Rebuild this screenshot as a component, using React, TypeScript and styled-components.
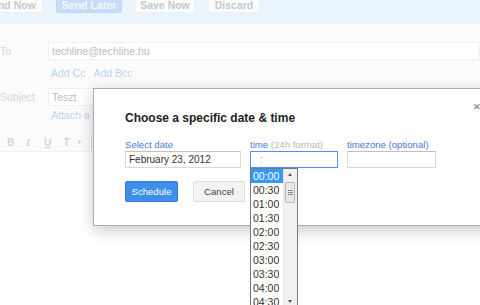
import React from "react";
import styled, { createGlobalStyle } from "styled-components";

const GlobalStyle = createGlobalStyle`
  html, body {
    margin: 0;
    padding: 0;
    background: #fff;
  }
  body {
    font-family: "Liberation Sans", Arial, sans-serif;
    width: 480px;
    height: 305px;
    overflow: hidden;
  }
`;

const Page = styled.div`
  position: relative;
  width: 480px;
  height: 305px;
  overflow: hidden;
  background: #fff;
`;

const TopBar = styled.div`
  height: 24px;
  background: #eaf4fc;
  display: flex;
  align-items: flex-start;
  gap: 13px;
  margin-left: -22px;
`;

const BarButton = styled.div<{ $primary?: boolean; $width: number }>`
  width: ${(p) => p.$width}px;
  height: 22px;
  margin-top: -9px;
  border-radius: 2px;
  box-sizing: border-box;
  background: ${(p) => (p.$primary ? "#c6dcf8" : "#fbfcfd")};
  border: 1px solid ${(p) => (p.$primary ? "#c0d6f4" : "#eef2f5")};
  color: ${(p) => (p.$primary ? "#f4f8fe" : "#c8c8c8")};
  font-size: 10.5px;
  font-weight: bold;
  display: flex;
  align-items: center;
  justify-content: center;
  padding-top: 5px;
`;

const Form = styled.div`
  background: #fbfbfb;
  padding-top: 18px;
  display: flex;
  flex-direction: column;
`;

const FieldRow = styled.div`
  display: flex;
  align-items: center;
  height: 18px;
`;

const FieldLabel = styled.div`
  width: 48px;
  color: #d8d8d8;
  font-size: 10.5px;
`;

const FieldInput = styled.div<{ $width?: number }>`
  ${(p) => (p.$width ? `width: ${p.$width}px;` : "flex: 1;")}
  height: 18px;
  box-sizing: border-box;
  background: #fff;
  border: 1px solid #f1f1f1;
  color: #bdbdbd;
  font-size: 10.5px;
  padding-left: 3px;
  display: flex;
  align-items: center;
`;

const LinkLine = styled.div<{ $top: number; $bottom: number }>`
  margin-left: 51px;
  height: 14px;
  margin-top: ${(p) => p.$top}px;
  margin-bottom: ${(p) => p.$bottom}px;
  display: flex;
  align-items: center;
  gap: 8px;
  color: #bcd3f5;
  font-size: 10.5px;
  white-space: nowrap;
`;

const FormatBar = styled.div`
  height: 18px;
  border-bottom: 1px solid #f2f2f2;
  display: flex;
  align-items: center;
  padding-left: 7px;
  color: #d4d4d4;
  font-size: 10px;
  font-weight: bold;
`;

const FormatIcon = styled.span<{ $italic?: boolean; $underline?: boolean; $gap: number }>`
  margin-right: ${(p) => p.$gap}px;
  font-style: ${(p) => (p.$italic ? "italic" : "normal")};
  text-decoration: ${(p) => (p.$underline ? "underline" : "none")};
  font-family: ${(p) => (p.$italic ? '"Liberation Serif", serif' : "inherit")};
`;

const Caret = styled.span`
  font-size: 6px;
  margin-right: 9px;
`;

const Separator = styled.span`
  width: 1px;
  height: 12px;
  background: #e2e2e2;
`;

const Body = styled.div`
  height: 160px;
  background: #fff;
`;

const Dialog = styled.div`
  position: absolute;
  left: 93px;
  top: 88px;
  width: 430px;
  height: 138px;
  box-sizing: border-box;
  background: #fff;
  border: 1px solid #acacac;
  box-shadow: 0 4px 14px rgba(0, 0, 0, 0.22);
  padding: 22px 0 0 31px;
`;

const Close = styled.div`
  position: absolute;
  left: 379px;
  top: 13px;
  color: #909090;
  font-size: 9px;
  font-weight: bold;
`;

const Title = styled.div`
  font-size: 12px;
  line-height: 14px;
  font-weight: bold;
  color: #222;
`;

const Fields = styled.div`
  display: flex;
  gap: 9px;
  margin-top: 14px;
`;

const Field = styled.div<{ $width: number }>`
  position: relative;
  width: ${(p) => p.$width}px;
`;

const Label = styled.div`
  font-size: 9.6px;
  line-height: 12px;
  height: 12px;
  color: #4679d8;
  white-space: nowrap;
`;

const Hint = styled.span`
  color: #b7b7b7;
`;

const TextBox = styled.div<{ $focused?: boolean }>`
  height: 17px;
  box-sizing: border-box;
  border: 1px solid ${(p) => (p.$focused ? "#4d90fe" : "#d9d9d9")};
  border-top-color: ${(p) => (p.$focused ? "#4d90fe" : "#c0c0c0")};
  font-size: 10px;
  color: #333;
  padding-left: 3px;
  display: flex;
  align-items: center;
  white-space: nowrap;
`;

const Placeholder = styled.span`
  color: #aaa;
  padding-left: 6px;
`;

const Actions = styled.div`
  display: flex;
  gap: 15px;
  margin-top: 13px;
`;

const ActionButton = styled.div<{ $primary?: boolean; $width: number }>`
  width: ${(p) => p.$width}px;
  height: 21px;
  box-sizing: border-box;
  border-radius: 2px;
  font-size: 9.6px;
  display: flex;
  align-items: center;
  justify-content: center;
  background: ${(p) => (p.$primary ? "#3f8eea" : "#f3f3f3")};
  border: 1px solid ${(p) => (p.$primary ? "#3079ed" : "#dcdcdc")};
  color: ${(p) => (p.$primary ? "#fff" : "#444")};
`;

const ListBox = styled.div`
  position: absolute;
  left: 0;
  top: 29px;
  width: 48px;
  height: 140px;
  box-sizing: border-box;
  background: #fff;
  border: 1px solid #7a7a7a;
  display: flex;
`;

const Options = styled.div`
  flex: 1;
  display: flex;
  flex-direction: column;
`;

const Option = styled.div<{ $selected?: boolean }>`
  height: 14px;
  line-height: 14px;
  font-size: 10.5px;
  padding-left: 2px;
  background: ${(p) => (p.$selected ? "#3399ff" : "transparent")};
  color: ${(p) => (p.$selected ? "#fff" : "#333")};
`;

const ScrollBar = styled.div`
  width: 13px;
  background: #f0f0f0;
  border-left: 1px solid #e4e4e4;
  position: relative;
`;

const Arrow = styled.div<{ $down?: boolean }>`
  position: absolute;
  left: 4px;
  ${(p) => (p.$down ? "top: 131px;" : "top: 4px;")}
  width: 0;
  height: 0;
  border-left: 2.5px solid transparent;
  border-right: 2.5px solid transparent;
  ${(p) =>
    p.$down ? "border-top: 3px solid #555;" : "border-bottom: 3px solid #555;"}
`;

const Thumb = styled.div`
  position: absolute;
  left: 1px;
  top: 13px;
  width: 10px;
  height: 21px;
  box-sizing: border-box;
  background: #e8e8e8;
  border: 1px solid #b8b8b8;
  border-radius: 2px;
  display: flex;
  flex-direction: column;
  justify-content: center;
  align-items: center;
  gap: 1px;
`;

const Grip = styled.div`
  width: 5px;
  height: 1px;
  background: #888;
`;

const times = [
  "00:00",
  "00:30",
  "01:00",
  "01:30",
  "02:00",
  "02:30",
  "03:00",
  "03:30",
  "04:00",
  "04:30",
];

const App: React.FC = () => {
  return (
    <Page>
      <GlobalStyle />
      <TopBar>
        <BarButton $width={65}>Send Now</BarButton>
        <BarButton $width={66} $primary>
          Send Later
        </BarButton>
        <BarButton $width={60}>Save Now</BarButton>
        <BarButton $width={52}>Discard</BarButton>
      </TopBar>

      <Form>
        <FieldRow>
          <FieldLabel>To</FieldLabel>
          <FieldInput>techline@techline.hu</FieldInput>
        </FieldRow>
        <LinkLine $top={6} $bottom={8}>
          <span>Add Cc</span>
          <span>Add Bcc</span>
        </LinkLine>
        <FieldRow>
          <FieldLabel>Subject</FieldLabel>
          <FieldInput $width={60}>Teszt</FieldInput>
        </FieldRow>
        <LinkLine $top={2} $bottom={11}>
          <span>Attach a file</span>
        </LinkLine>
        <FormatBar>
          <FormatIcon $gap={12}>B</FormatIcon>
          <FormatIcon $italic $gap={14}>
            I
          </FormatIcon>
          <FormatIcon $underline $gap={12}>
            U
          </FormatIcon>
          <FormatIcon $gap={7}>T</FormatIcon>
          <Caret>▼</Caret>
          <Separator />
        </FormatBar>
      </Form>
      <Body />

      <Dialog>
        <Close>✕</Close>
        <Title>Choose a specific date &amp; time</Title>
        <Fields>
          <Field $width={116}>
            <Label>Select date</Label>
            <TextBox>February 23, 2012</TextBox>
          </Field>
          <Field $width={88}>
            <Label>
              time <Hint>(24h format)</Hint>
            </Label>
            <TextBox $focused>
              <Placeholder>:</Placeholder>
            </TextBox>
            <ListBox>
              <Options>
                {times.map((t, i) => (
                  <Option key={t} $selected={i === 0}>
                    {t}
                  </Option>
                ))}
              </Options>
              <ScrollBar>
                <Arrow />
                <Thumb>
                  <Grip />
                  <Grip />
                  <Grip />
                </Thumb>
                <Arrow $down />
              </ScrollBar>
            </ListBox>
          </Field>
          <Field $width={89}>
            <Label>timezone (optional)</Label>
            <TextBox />
          </Field>
        </Fields>
        <Actions>
          <ActionButton $primary $width={53}>
            Schedule
          </ActionButton>
          <ActionButton $width={52}>Cancel</ActionButton>
        </Actions>
      </Dialog>
    </Page>
  );
};

export default App;
